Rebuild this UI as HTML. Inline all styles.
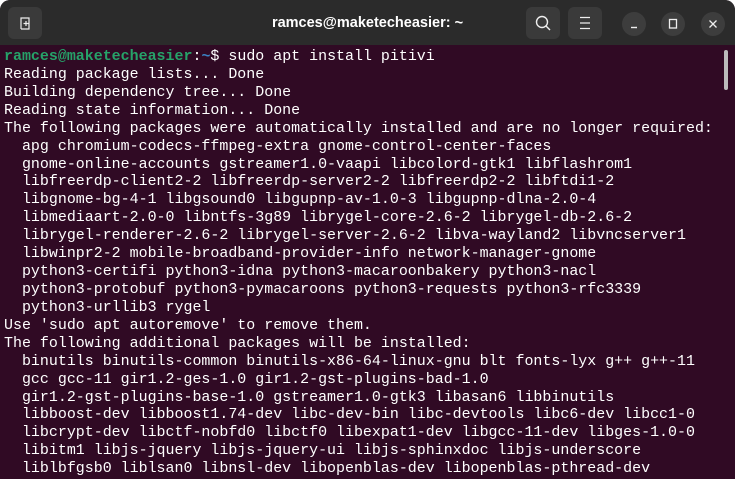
<!DOCTYPE html>
<html><head><meta charset="utf-8"><style>
html,body{margin:0;padding:0;width:735px;height:479px;overflow:hidden;background:#fff}
.win{position:absolute;left:0;top:0;width:735px;height:479px;background:#300a24;border-radius:10px 10px 0 0;overflow:hidden}
.bar{position:absolute;left:0;top:0;width:735px;height:45px;background:#2b2b2b}
.btn{position:absolute;top:7px;width:34px;height:32px;border-radius:6px;background:#3a3a3a}
.cir{position:absolute;top:12px;width:24px;height:24px;border-radius:50%;background:#3d3d3d}
.title{position:absolute;top:15px;left:0;width:735px;text-align:center;color:#fff;font:bold 14.5px "Liberation Sans",sans-serif}
pre{position:absolute;left:4px;top:49px;margin:0;font:14.96px/17.92px "Liberation Mono",monospace;color:#fff}
.g{color:#26a269;font-weight:bold}.b{color:#3b82c4;font-weight:bold}
.sb{position:absolute;left:724px;top:50px;width:4px;height:40px;border-radius:2px;background:#bbb}
</style></head><body><div class="win">
<div class="bar">
<div class="btn" style="left:8px"><svg width="34" height="32"><path d="M13 22v-11h8v11h-8" fill="none" stroke="#eee" stroke-width="1.2"/><path d="M18 14v5M15.5 16.5h5" stroke="#eee" stroke-width="1.2"/></svg></div>
<div class="title">ramces@maketecheasier: ~</div>
<div class="btn" style="left:526px"><svg width="34" height="32"><circle cx="16" cy="15" r="5.5" fill="none" stroke="#eee" stroke-width="1.4"/><path d="M20 19l4 4" stroke="#eee" stroke-width="1.4"/></svg></div>
<div class="btn" style="left:568px"><svg width="34" height="32"><path d="M12 10.5h10M12 16h10M12 21.5h10" stroke="#eee" stroke-width="1.3"/></svg></div>
<div class="cir" style="left:622px"><svg width="24" height="24"><path d="M9 15.5h6" stroke="#eee" stroke-width="1.4"/></svg></div>
<div class="cir" style="left:661px"><svg width="24" height="24"><rect x="8.5" y="7.5" width="7" height="8.5" fill="none" stroke="#eee" stroke-width="1.3"/></svg></div>
<div class="cir" style="left:701px"><svg width="24" height="24"><path d="M8.5 8.5l7 7M15.5 8.5l-7 7" stroke="#eee" stroke-width="1.3"/></svg></div>
</div>
<div class="sb"></div>
<pre><span class="g">ramces@maketecheasier</span>:<span class="b">~</span>$ sudo apt install pitivi
Reading package lists... Done
Building dependency tree... Done
Reading state information... Done
The following packages were automatically installed and are no longer required:
  apg chromium-codecs-ffmpeg-extra gnome-control-center-faces
  gnome-online-accounts gstreamer1.0-vaapi libcolord-gtk1 libflashrom1
  libfreerdp-client2-2 libfreerdp-server2-2 libfreerdp2-2 libftdi1-2
  libgnome-bg-4-1 libgsound0 libgupnp-av-1.0-3 libgupnp-dlna-2.0-4
  libmediaart-2.0-0 libntfs-3g89 librygel-core-2.6-2 librygel-db-2.6-2
  librygel-renderer-2.6-2 librygel-server-2.6-2 libva-wayland2 libvncserver1
  libwinpr2-2 mobile-broadband-provider-info network-manager-gnome
  python3-certifi python3-idna python3-macaroonbakery python3-nacl
  python3-protobuf python3-pymacaroons python3-requests python3-rfc3339
  python3-urllib3 rygel
Use 'sudo apt autoremove' to remove them.
The following additional packages will be installed:
  binutils binutils-common binutils-x86-64-linux-gnu blt fonts-lyx g++ g++-11
  gcc gcc-11 gir1.2-ges-1.0 gir1.2-gst-plugins-bad-1.0
  gir1.2-gst-plugins-base-1.0 gstreamer1.0-gtk3 libasan6 libbinutils
  libboost-dev libboost1.74-dev libc-dev-bin libc-devtools libc6-dev libcc1-0
  libcrypt-dev libctf-nobfd0 libctf0 libexpat1-dev libgcc-11-dev libges-1.0-0
  libitm1 libjs-jquery libjs-jquery-ui libjs-sphinxdoc libjs-underscore
  liblbfgsb0 liblsan0 libnsl-dev libopenblas-dev libopenblas-pthread-dev</pre>
</div></body></html>
